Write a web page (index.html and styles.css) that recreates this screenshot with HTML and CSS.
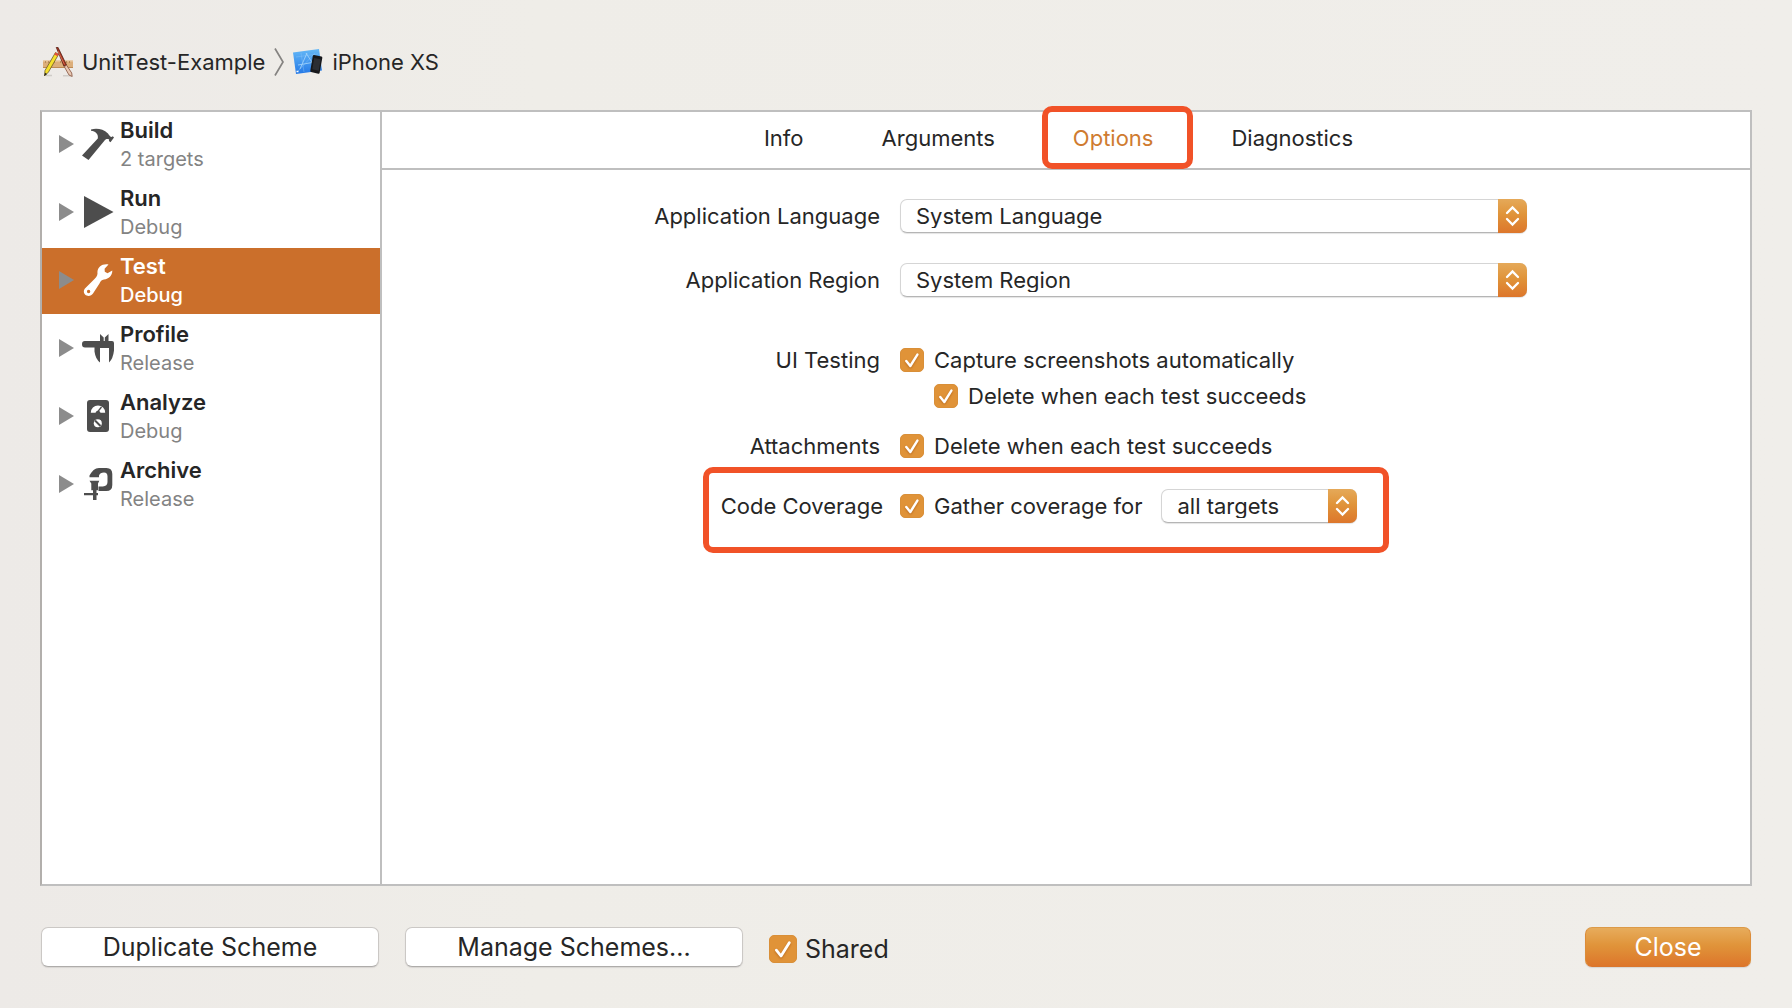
FILE: index.html
```html
<!DOCTYPE html>
<html lang="en">
<head>
<meta charset="utf-8">
<title>Edit Scheme</title>
<link rel="stylesheet" href="styles.css">
</head>
<body>
<svg class="sprite" aria-hidden="true">
  <symbol id="check" viewBox="0 0 24 24"><path d="M6.3 13 10.3 18 17.4 6.6" fill="none" stroke="#fff" stroke-width="2.4" stroke-linecap="round" stroke-linejoin="round"/></symbol>
  <symbol id="updown" viewBox="0 0 28 34"><path d="M8.5 14 14 8.5 19.5 14M8.5 20 14 25.500 19.500 20" fill="none" stroke="#fff" stroke-width="2.300" stroke-linecap="round"/></symbol>
</svg>

<header class="path-bar">
  <svg class="app-icon" viewBox="0 0 30 30" aria-hidden="true">
    <path d="M3 28.500h6M20 28.800h8" stroke="#cfccc8" stroke-width="1.500"/>
    <path d="M0 13.500h30v7.500H0z" fill="#dcae7a"/>
    <path d="M0 14h30" stroke="#eccda6"/>
    <path d="M2.500 14v2m3-2v2m3-2v2m3-2v2m6-2v2m3-2v2m3-2v2m3-2v2" stroke="#a5784a" stroke-width=".7"/>
    <path d="M0 20.500h30" stroke="#bd8a54"/>
    <path d="M12.500 5.500 15.500 7.500 5.500 25 1.500 29 2 23.500z" fill="#f6e02b" stroke="#6b5a25" stroke-width=".8"/>
    <path d="M12.500 5.200 15.700 7.300 14.500 9.300 11.300 7.400z" fill="#e0503a"/>
    <path d="M2 25.800 4 27 1.300 29z" fill="#222"/>
    <path d="M13.200.3 15 .3 23.500 18 20.900 19.200z" fill="#a5301d" stroke="#4b1b12" stroke-width=".7"/>
    <path d="m15 4 6.500 13.500" stroke="#e47b5b" stroke-width=".8"/>
    <path d="m21.200 19.500 2.500-1.200 5 7.700.5 3.500-3.200-1.500z" fill="#e9c9b4" stroke="#84503c" stroke-width=".8"/>
  </svg>
  <span class="path-name">UnitTest-Example</span>
  <svg class="path-sep" viewBox="0 0 10 28" aria-hidden="true"><path d="M1 .5 9 14 1 27.500" fill="none" stroke="#858381" stroke-width="1.700"/></svg>
  <svg class="device-icon" viewBox="0 0 30 26" aria-hidden="true">
    <defs><linearGradient id="sky" x1="0" y1="0" x2="0" y2="1"><stop offset="0" stop-color="#64b8f7"/><stop offset="1" stop-color="#2579e6"/></linearGradient></defs>
    <path d="M0 3.500 26 0 29 21.500 3 25z" fill="url(#sky)"/>
    <path d="M14 4 7 20M13 4l9 14M5 16l17-3" fill="none" stroke="#a8d7fb" stroke-width=".8"/>
    <path d="M3 8l22-3M5 22 22 4M8 4l3 19" fill="none" stroke="#8cc8fa" stroke-width=".4"/>
    <path d="M3.500 22.500h2" stroke="#fff" stroke-width="1.500"/>
    <path d="m21 6 7.500 1.600q1 .4.800 1.400L26.600 24q-.3.900-1.300.7L18 23q-.9-.3-.7-1.200L19.800 7q.3-1.100 1.200-1z" fill="#17181b"/>
    <path d="m21.200 9 6.500 1.300-2 11.400-6.400-1.400z" fill="#2c2e33"/>
  </svg>
  <span class="path-name">iPhone XS</span>
</header>

<main class="panel">
  <nav class="actions" aria-label="Scheme actions">
    <a class="action" href="#build">
      <span class="disclosure"></span>
      <svg class="action-icon" viewBox="0 0 32 32"><path d="M9 1.500C15 0 21 1 26 5.500c1 1.400 2.300 3.500 3.600 3.500l1.200-.8L32 9.500l-3.500 4.700-1.600-1.200.2-1.500c-2-.8-3.600-.4-4.700 1.200L6.500 32 0 27.500 15.800 10.500c.8-4-2.200-7.500-6.800-7.700z"/></svg>
      <span class="action-text"><strong>Build</strong><small>2 targets</small></span>
    </a>
    <a class="action" href="#run">
      <span class="disclosure"></span>
      <svg class="action-icon" viewBox="0 0 32 32"><path d="M2 0 31.500 16 2 32z"/></svg>
      <span class="action-text"><strong>Run</strong><small>Debug</small></span>
    </a>
    <a class="action selected" href="#test" aria-current="true">
      <span class="disclosure"></span>
      <svg class="action-icon" viewBox="0 0 32 32"><path fill-rule="evenodd" d="M26.500.400C20 -.8 14.700 3.500 15.500 9.500 15.500 12 13.500 14 11.500 16L3.200 24.200C0 28 3 32 6.500 32 8.500 32 9.800 31 11 29.500L17.500 19.500C18.500 17.500 19.500 16 22 15.600 27 15 30.500 11.500 30.300 6.400L25.500 9.200 22.800 7.800 22.600 4.800zM6.600 25.800a1.700 1.700 0 1 1 0 3.400 1.700 1.700 0 1 1 0-3.400z"/></svg>
      <span class="action-text"><strong>Test</strong><small>Debug</small></span>
    </a>
    <a class="action" href="#profile">
      <span class="disclosure"></span>
      <svg class="action-icon" viewBox="0 0 32 32"><path d="M3 9H18V2l3.700 3.500V9h1.100V5.500L26.500 2v7H30q2 0 2 2v7.500Q31 27 27 30.500V16h-9v14.500Q13.500 27 12.500 19.500V15.500H3Q0 15.500 0 12.200T3 9z"/></svg>
      <span class="action-text"><strong>Profile</strong><small>Release</small></span>
    </a>
    <a class="action" href="#analyze">
      <span class="disclosure"></span>
      <svg class="action-icon" viewBox="0 0 32 32"><rect x="5" width="22" height="32" rx="3"/><path d="M8.800 12.700a7.200 7.200 0 0 1 14.400 0h-4.700a2.600 2.600 0 0 0-5 0z" fill="#fff"/><path d="m15.500 12 4-5" stroke="#4d4d4d" stroke-width="1.300"/><circle cx="15.800" cy="23.300" r="4" fill="#fff"/><path d="m13 20.500 5.500 5.500" stroke="#4d4d4d" stroke-width="2"/></svg>
      <span class="action-text"><strong>Analyze</strong><small>Debug</small></span>
    </a>
    <a class="action" href="#archive">
      <span class="disclosure"></span>
      <svg class="action-icon" viewBox="0 0 32 32"><path d="M7.500 7.500C10 3 13 0 17 0h7.500Q30.300 0 30.300 6v11q0 6-6 6H16.500V18.500h4.300Q25.500 18 25.500 14V8.500Q25.500 4.500 22 4.500 18 4.500 17 7.500v1.800H7.500zM7.500 12.700h9.800L16 15.500v6.800H14.500V25H16v2.300H14.500V32H11V27.300H2V25h9V22.300H9.300V15.500z"/></svg>
      <span class="action-text"><strong>Archive</strong><small>Release</small></span>
    </a>
  </nav>

  <section class="detail">
    <div class="tabs" role="tablist">
      <button class="tab" role="tab">Info</button>
      <button class="tab" role="tab">Arguments</button>
      <button class="tab current" role="tab" aria-selected="true">Options<span class="mark tab-mark"></span></button>
      <button class="tab" role="tab">Diagnostics</button>
    </div>

    <form class="options">
      <div class="row popup-row">
        <label class="name" for="language">Application Language</label>
        <span class="popup wide"><select id="language"><option>System Language</option></select><svg class="popup-arrows" aria-hidden="true"><use href="#updown"/></svg></span>
      </div>
      <div class="row popup-row">
        <label class="name" for="region">Application Region</label>
        <span class="popup wide"><select id="region"><option>System Region</option></select><svg class="popup-arrows" aria-hidden="true"><use href="#updown"/></svg></span>
      </div>
      <div class="row ui-row">
        <span class="name">UI Testing</span>
        <div class="checks">
          <label class="check"><span class="box"><input type="checkbox" checked><svg aria-hidden="true"><use href="#check"/></svg></span>Capture screenshots automatically</label>
          <label class="check nested"><span class="box"><input type="checkbox" checked><svg aria-hidden="true"><use href="#check"/></svg></span>Delete when each test succeeds</label>
        </div>
      </div>
      <div class="row attach-row">
        <span class="name">Attachments</span>
        <label class="check"><span class="box"><input type="checkbox" checked><svg aria-hidden="true"><use href="#check"/></svg></span>Delete when each test succeeds</label>
      </div>
      <div class="row coverage-row">
        <span class="name">Code Coverage</span>
        <div class="coverage">
          <label class="check"><span class="box"><input type="checkbox" checked><svg aria-hidden="true"><use href="#check"/></svg></span>Gather coverage for</label>
          <span class="popup short"><select aria-label="Coverage targets"><option>all targets</option></select><svg class="popup-arrows" aria-hidden="true"><use href="#updown"/></svg></span>
        </div>
        <span class="mark coverage-mark"></span>
      </div>
    </form>
  </section>
</main>

<footer class="footer">
  <button class="push">Duplicate Scheme</button>
  <button class="push">Manage Schemes...</button>
  <label class="check shared"><span class="box"><input type="checkbox" checked><svg aria-hidden="true"><use href="#check"/></svg></span>Shared</label>
  <button class="push primary">Close</button>
</footer>
</body>
</html>
```
FILE: styles.css
```css
* { box-sizing: border-box; }

body {
  margin: 0;
  min-height: 100vh;
  padding: 47px 40px 41px;
  display: flex;
  flex-direction: column;
  background: linear-gradient(90deg, #edeae7, #efede8 30%, #f0eeea);
  color: #262626;
  font: 22px/26px Inter, "Liberation Sans", sans-serif;
}

button, select { font: inherit; color: inherit; }

.sprite { display: none; }

/* Path bar */
.path-bar {
  display: flex;
  align-items: center;
  height: 30px;
  margin: 0 3px 33px;
}
.app-icon { width: 30px; height: 30px; }
.path-name { margin-left: 9px; }
.path-sep { width: 10px; height: 28px; margin: 0 9px; }
.device-icon { width: 30px; height: 26px; }

/* Main panel */
.panel {
  flex: 1;
  display: flex;
  border: 2px solid #bfbfbf;
  border-left-color: #b2afac;
  background: #fff;
}

.actions {
  flex: none;
  width: 340px;
  display: flex;
  flex-direction: column;
  gap: 2px;
  border-right: 2px solid #bfbfbf;
}
.action {
  display: flex;
  align-items: center;
  height: 66px;
  padding: 0 0 2px 17px;
  color: #262626;
  text-decoration: none;
}
.disclosure {
  width: 15px;
  height: 18px;
  margin-right: 8px;
  background: #8c8c8c;
  clip-path: polygon(0 0, 100% 50%, 0 100%);
}
.action-icon { width: 32px; height: 32px; margin-right: 6px; fill: #4d4d4d; }
.action-text { display: flex; flex-direction: column; padding-top: 2px; line-height: 29px; }
.action-text strong { font-weight: 600; }
.action-text small { font-size: 20px; color: #838383; }
.selected { background: #cb6f2b; color: #fff; }
.selected .action-icon { fill: #fff; }
.action.selected small { color: #fff; font-weight: 500; }

.detail { flex: 1; }
.tabs {
  display: flex;
  justify-content: center;
  gap: 78px;
  height: 58px;
  padding: 0 15px 4px 0;
  border-bottom: 2px solid #bfbfbf;
}
.tab { position: relative; padding: 0; border: 0; background: none; }
.current { color: #cf7b30; }

/* Call-outs drawn over the controls */
.mark { position: absolute; border: 6px solid #f15228; border-radius: 10px; pointer-events: none; }
.tab-mark { inset: -6px -40px -5px -31px; }
.coverage-mark { inset: -22px 138px -30px 98px; }

/* Options form */
.options { width: 100%; max-width: 922px; margin: 0 auto; padding-top: 29px; }
.row {
  position: relative;
  display: grid;
  grid-template-columns: 275px 1fr;
  column-gap: 20px;
  line-height: 24px;
}
.name { text-align: right; }
.popup-row { align-items: center; margin-bottom: 30px; }
.ui-row { margin-top: 51px; }
.attach-row { margin-top: 26px; }
.coverage-row {
  grid-template-columns: 278px 1fr;
  column-gap: 17px;
  align-items: center;
  margin-top: 31px;
}
.checks { display: grid; gap: 12px; }
.coverage { display: flex; align-items: center; gap: 19px; }

.check { display: flex; align-items: center; gap: 10px; }
.nested { padding-left: 34px; }
.box { display: grid; flex: none; width: 24px; height: 24px; }
.box input, .box svg { grid-area: 1 / 1; width: 100%; height: 100%; margin: 0; }
.box input { appearance: none; border-radius: 5px; background: #e09338; border: 1px solid #d98f38; }
.box svg { pointer-events: none; filter: drop-shadow(0 1px 1px #b8691e); }

.popup { position: relative; display: block; height: 34px; }
.popup select {
  appearance: none;
  display: block;
  width: 100%;
  height: 34px;
  padding: 0 32px 0 15px;
  border: 1px solid #d5d5d5;
  border-bottom-color: #b5b5b5;
  border-radius: 7px;
  background: #fff;
  box-shadow: 0 1px 1px #e4e4e4;
}
.popup-arrows {
  position: absolute;
  top: 0;
  right: 0;
  width: 29px;
  height: 34px;
  border-radius: 0 7px 7px 0;
  background: linear-gradient(#e5a959, #e0943a 45%, #dd762b);
  pointer-events: none;
}
.short { width: 196px; }

/* Footer */
.footer {
  display: flex;
  align-items: center;
  margin-top: 41px;
  padding: 0 1px;
  gap: 26px;
  font-size: 25px;
}
.push {
  width: 338px;
  height: 40px;
  padding: 0;
  border: 1px solid #cbc8c5;
  border-bottom-color: #aeacaa;
  border-radius: 7px;
  background: #fff;
  box-shadow: 0 1px 1px #d8d5d2;
}
.shared { gap: 8px; padding-top: 3px; }
.shared .box { width: 28px; height: 28px; }
.primary {
  width: 166px;
  margin-left: auto;
  border-color: #dc9a48 #dc8c38 #d9762f;
  background: linear-gradient(#e7ac5c, #e0943a 45%, #dd762b);
  color: #fff;
}
```
